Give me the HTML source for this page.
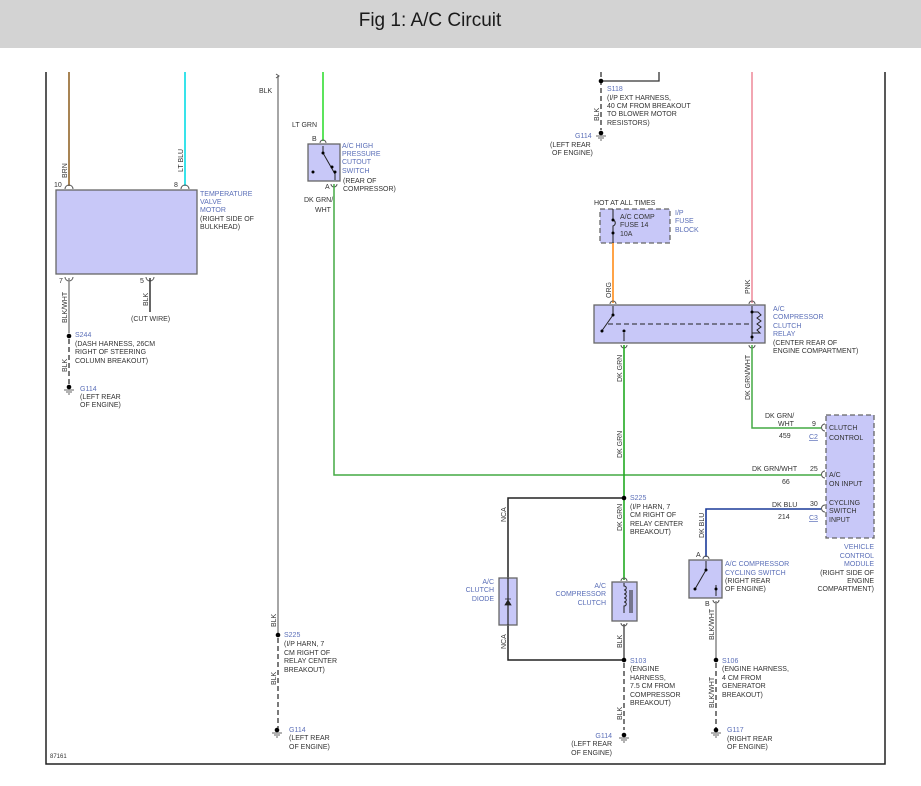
<!DOCTYPE html>
<html><head><meta charset="utf-8"><style>
body{margin:0;width:921px;height:786px;background:#fff;overflow:hidden}
svg{display:block}
text{font-family:"Liberation Sans",sans-serif;font-size:7px;fill:#333}
.b{fill:#5b6fb8}
.box{fill:#c8c8f8;stroke:#666;stroke-width:1.3}
.dbox{fill:#c8c8f8;stroke:#666;stroke-width:1.3;stroke-dasharray:5,3}
</style></head><body>
<svg width="921" height="786" viewBox="0 0 921 786">
<rect x="0" y="0" width="921" height="48" fill="#d3d3d3"/>
<text x="430" y="26" text-anchor="middle" style="font-size:19px;fill:#1a1a1a">Fig 1: A/C Circuit</text>
<path d="M46 72V764H885V72" fill="none" stroke="#222" stroke-width="1.5"/>
<text x="50" y="758" style="font-size:6px">87161</text>

<line x1="69" y1="72" x2="69" y2="186" stroke="#8a5a1a" stroke-width="1.5"/>
<line x1="185" y1="72" x2="185" y2="186" stroke="#22e0e8" stroke-width="1.8"/>
<text transform="translate(67,178) rotate(-90)">BRN</text>
<text transform="translate(183,172) rotate(-90)">LT BLU</text>
<text x="54" y="187">10</text><text x="174" y="187">8</text>
<path d="M65 189a4 4 0 0 1 8 0M181 189a4 4 0 0 1 8 0" fill="none" stroke="#555"/>
<rect class="box" x="56" y="190" width="141" height="84"/>
<text class="b" x="200" y="196">TEMPERATURE</text><text class="b" x="200" y="204">VALVE</text><text class="b" x="200" y="212">MOTOR</text>
<text x="200" y="221">(RIGHT SIDE OF</text><text x="200" y="229">BULKHEAD)</text>
<text x="59" y="283">7</text><text x="140" y="283">5</text>
<path d="M65 277a4 4 0 0 0 8 0M146 277a4 4 0 0 0 8 0" fill="none" stroke="#555"/>
<line x1="69" y1="278" x2="69" y2="333" stroke="#888" stroke-width="1.5"/>
<line x1="150" y1="278" x2="150" y2="312" stroke="#333" stroke-width="1.5"/>
<text transform="translate(67,323) rotate(-90)">BLK/WHT</text>
<text transform="translate(148,306) rotate(-90)">BLK</text>
<text x="131" y="321">(CUT WIRE)</text>
<circle cx="69" cy="336" r="2.3" fill="#000"/>
<line x1="69" y1="339" x2="69" y2="385" stroke="#333" stroke-width="1.3" stroke-dasharray="5,3"/>
<text class="b" x="75" y="337">S244</text>
<text x="75" y="346">(DASH HARNESS, 26CM</text><text x="75" y="354">RIGHT OF STEERING</text><text x="75" y="363">COLUMN BREAKOUT)</text>
<text transform="translate(67,372) rotate(-90)">BLK</text>
<circle cx="69" cy="387" r="2.3" fill="#000"/><path d="M64 390h10M66 392h6M68 394h2" stroke="#666"/>
<text class="b" x="80" y="391">G114</text><text x="80" y="399">(LEFT REAR</text><text x="80" y="407">OF ENGINE)</text>

<line x1="278" y1="76" x2="278" y2="633" stroke="#888" stroke-width="1.5"/>
<path d="M276 74l3 2-3 2" fill="none" stroke="#555"/>
<text x="259" y="93">BLK</text>
<text transform="translate(276,627) rotate(-90)">BLK</text>
<circle cx="278" cy="635" r="2.3" fill="#000"/>
<line x1="278" y1="638" x2="278" y2="728" stroke="#333" stroke-width="1.3" stroke-dasharray="5,3"/>
<text transform="translate(276,685) rotate(-90)">BLK</text>
<text class="b" x="284" y="637">S225</text><text x="284" y="646">(I/P HARN, 7</text><text x="284" y="655">CM RIGHT OF</text><text x="284" y="663">RELAY CENTER</text><text x="284" y="672">BREAKOUT)</text>
<circle cx="277" cy="730" r="2.3" fill="#000"/><path d="M272 733h10M274 735h6M276 737h2" stroke="#666"/>
<text class="b" x="289" y="732">G114</text><text x="289" y="740">(LEFT REAR</text><text x="289" y="749">OF ENGINE)</text>

<line x1="323" y1="72" x2="323" y2="141" stroke="#33dd33" stroke-width="1.6"/>
<text x="292" y="127">LT GRN</text><text x="312" y="141">B</text>
<path d="M320 143a3 3 0 0 1 6 0" fill="none" stroke="#555"/>
<rect class="box" x="308" y="144" width="32" height="37"/>
<path d="M323 146v7l8 14 4 7v6" fill="none" stroke="#222"/>
<circle cx="323" cy="153" r="1.5"/><circle cx="332" cy="167" r="1.5"/><circle cx="335" cy="172" r="1.5"/><circle cx="313" cy="172" r="1.5"/>
<text class="b" x="342" y="148">A/C HIGH</text><text class="b" x="342" y="156">PRESSURE</text><text class="b" x="342" y="164">CUTOUT</text><text class="b" x="342" y="173">SWITCH</text>
<text x="343" y="183">(REAR OF</text><text x="343" y="191">COMPRESSOR)</text>
<text x="325" y="189">A</text>
<path d="M331 184a3 3 0 0 0 6 0" fill="none" stroke="#555"/>
<text x="304" y="202">DK GRN/</text><text x="315" y="212">WHT</text>
<path d="M334 184V475H821" fill="none" stroke="#44aa44" stroke-width="1.5"/>
<text x="752" y="471">DK GRN/WHT</text><text x="782" y="484">66</text><text x="810" y="471">25</text>

<line x1="601" y1="72" x2="601" y2="130" stroke="#333" stroke-width="1.3" stroke-dasharray="5,3"/>
<path d="M601 81H659V72" fill="none" stroke="#333" stroke-width="1.3"/>
<circle cx="601" cy="81" r="2.3" fill="#000"/>
<text class="b" x="607" y="91">S118</text><text x="607" y="100">(I/P EXT HARNESS,</text><text x="607" y="108">40 CM FROM BREAKOUT</text><text x="607" y="116">TO BLOWER MOTOR</text><text x="607" y="125">RESISTORS)</text>
<text transform="translate(599,121) rotate(-90)">BLK</text>
<circle cx="601" cy="133" r="2.3" fill="#000"/><path d="M596 136h10M598 138h6M600 140h2" stroke="#666"/>
<text class="b" x="575" y="138">G114</text><text x="550" y="147">(LEFT REAR</text><text x="552" y="155">OF ENGINE)</text>

<text x="594" y="205">HOT AT ALL TIMES</text>
<rect class="dbox" x="600" y="209" width="70" height="34"/>
<path d="M613 209v11c3 1 3 5 0 6v17" fill="none" stroke="#222"/>
<circle cx="613" cy="220" r="1.5"/><circle cx="613" cy="233" r="1.5"/>
<text x="620" y="219">A/C COMP</text><text x="620" y="227">FUSE 14</text><text x="620" y="236">10A</text>
<text class="b" x="675" y="215">I/P</text><text class="b" x="675" y="223">FUSE</text><text class="b" x="675" y="232">BLOCK</text>
<line x1="613" y1="243" x2="613" y2="303" stroke="#ff9933" stroke-width="1.8"/>
<text transform="translate(611,298) rotate(-90)">ORG</text>
<line x1="752" y1="72" x2="752" y2="303" stroke="#ee8899" stroke-width="1.5"/>
<text transform="translate(750,294) rotate(-90)">PNK</text>

<path d="M610 304a3 3 0 0 1 6 0M749 304a3 3 0 0 1 6 0" fill="none" stroke="#555"/>
<rect class="box" x="594" y="305" width="171" height="38"/>
<path d="M613 306v9l-12 17M624 333v8" fill="none" stroke="#222"/>
<circle cx="613" cy="315" r="1.5"/><circle cx="602" cy="331" r="1.5"/><circle cx="624" cy="331" r="1.5"/>
<line x1="608" y1="324" x2="750" y2="324" stroke="#222" stroke-dasharray="5,3"/>
<path d="M752 306v35M752 312h6l3 3-4 3 4 3-4 3 4 3-4 3 3 3h-8" fill="none" stroke="#222"/>
<circle cx="752" cy="312" r="1.5"/><circle cx="752" cy="337" r="1.5"/>
<path d="M621 345a3 3 0 0 0 6 0M749 345a3 3 0 0 0 6 0" fill="none" stroke="#555"/>
<text class="b" x="773" y="311">A/C</text><text class="b" x="773" y="319">COMPRESSOR</text><text class="b" x="773" y="328">CLUTCH</text><text class="b" x="773" y="336">RELAY</text>
<text x="773" y="345">(CENTER REAR OF</text><text x="773" y="353">ENGINE COMPARTMENT)</text>
<line x1="624" y1="345" x2="624" y2="580" stroke="#22aa22" stroke-width="1.6"/>
<text transform="translate(622,382) rotate(-90)">DK GRN</text>
<text transform="translate(622,458) rotate(-90)">DK GRN</text>
<text transform="translate(622,531) rotate(-90)">DK GRN</text>
<path d="M752 345V428H821" fill="none" stroke="#44aa44" stroke-width="1.5"/>
<text transform="translate(750,400) rotate(-90)">DK GRN/WHT</text>
<text x="765" y="418">DK GRN/</text><text x="778" y="426">WHT</text><text x="779" y="438">459</text>
<text x="812" y="426">9</text><text x="809" y="439" class="b" style="text-decoration:underline">C2</text>

<rect class="dbox" x="826" y="415" width="48" height="123"/>
<path d="M825 424a3 3 0 0 0 0 7M825 471a3 3 0 0 0 0 7M825 505a3 3 0 0 0 0 7" fill="none" stroke="#555"/>
<text x="829" y="430">CLUTCH</text><text x="829" y="440">CONTROL</text>
<text x="829" y="477">A/C</text><text x="829" y="486">ON INPUT</text>
<text x="829" y="505">CYCLING</text><text x="829" y="513">SWITCH</text><text x="829" y="522">INPUT</text>
<text class="b" x="874" y="549" text-anchor="end">VEHICLE</text><text class="b" x="874" y="558" text-anchor="end">CONTROL</text><text class="b" x="874" y="566" text-anchor="end">MODULE</text>
<text x="874" y="575" text-anchor="end">(RIGHT SIDE OF</text><text x="874" y="583" text-anchor="end">ENGINE</text><text x="874" y="591" text-anchor="end">COMPARTMENT)</text>

<path d="M821 509H706V557" fill="none" stroke="#1a3a99" stroke-width="1.6"/>
<text x="772" y="507">DK BLU</text><text x="810" y="506">30</text><text x="778" y="519">214</text><text x="809" y="520" class="b" style="text-decoration:underline">C3</text>
<text transform="translate(704,538) rotate(-90)">DK BLU</text>
<text x="696" y="557">A</text>
<path d="M703 559a3 3 0 0 1 6 0" fill="none" stroke="#555"/>
<rect class="box" x="689" y="560" width="33" height="38"/>
<path d="M706 561v9l-11 19M716 585v11" fill="none" stroke="#222"/>
<circle cx="706" cy="570" r="1.5"/><circle cx="695" cy="589" r="1.5"/><circle cx="716" cy="589" r="1.5"/>
<text class="b" x="725" y="566">A/C COMPRESSOR</text><text class="b" x="725" y="575">CYCLING SWITCH</text>
<text x="725" y="583">(RIGHT REAR</text><text x="725" y="591">OF ENGINE)</text>
<text x="705" y="606">B</text>
<path d="M713 600a3 3 0 0 0 6 0" fill="none" stroke="#555"/>
<line x1="716" y1="601" x2="716" y2="658" stroke="#888" stroke-width="1.5"/>
<text transform="translate(714,640) rotate(-90)">BLK/WHT</text>
<circle cx="716" cy="660" r="2.3" fill="#000"/>
<line x1="716" y1="663" x2="716" y2="728" stroke="#333" stroke-width="1.3" stroke-dasharray="5,3"/>
<text transform="translate(714,708) rotate(-90)">BLK/WHT</text>
<text class="b" x="722" y="663">S106</text><text x="722" y="671">(ENGINE HARNESS,</text><text x="722" y="680">4 CM FROM</text><text x="722" y="688">GENERATOR</text><text x="722" y="697">BREAKOUT)</text>
<circle cx="716" cy="730" r="2.3" fill="#000"/><path d="M711 733h10M713 735h6M715 737h2" stroke="#666"/>
<text class="b" x="727" y="732">G117</text><text x="727" y="741">(RIGHT REAR</text><text x="727" y="749">OF ENGINE)</text>

<path d="M624 498H508V660H624" fill="none" stroke="#222" stroke-width="1.5"/>
<circle cx="624" cy="498" r="2.3" fill="#000"/>
<text class="b" x="630" y="500">S225</text><text x="630" y="509">(I/P HARN, 7</text><text x="630" y="517">CM RIGHT OF</text><text x="630" y="526">RELAY CENTER</text><text x="630" y="534">BREAKOUT)</text>
<text transform="translate(506,522) rotate(-90)">NCA</text>
<text transform="translate(506,649) rotate(-90)">NCA</text>
<rect class="box" x="499" y="578" width="18" height="47"/>
<line x1="508" y1="578" x2="508" y2="625" stroke="#222" stroke-width="1.2"/>
<path d="M505 605h6l-3-5zM505 599h6" fill="#222" stroke="#222" stroke-width="0.8"/>
<text class="b" x="494" y="584" text-anchor="end">A/C</text><text class="b" x="494" y="592" text-anchor="end">CLUTCH</text><text class="b" x="494" y="601" text-anchor="end">DIODE</text>
<path d="M621 581a3 3 0 0 1 6 0" fill="none" stroke="#555"/>
<rect class="box" x="612" y="582" width="25" height="39"/>
<path d="M624 583v3c3 0 3 4 0 4 3 0 3 4 0 4 3 0 3 4 0 4 3 0 3 4 0 4 3 0 3 4 0 4v7M630 590v23M632 590v23" fill="none" stroke="#222"/>
<text class="b" x="606" y="588" text-anchor="end">A/C</text><text class="b" x="606" y="596" text-anchor="end">COMPRESSOR</text><text class="b" x="606" y="605" text-anchor="end">CLUTCH</text>
<path d="M621 623a3 3 0 0 0 6 0" fill="none" stroke="#555"/>
<line x1="624" y1="624" x2="624" y2="658" stroke="#555" stroke-width="1.5"/>
<text transform="translate(622,648) rotate(-90)">BLK</text>
<circle cx="624" cy="660" r="2.3" fill="#000"/>
<line x1="624" y1="663" x2="624" y2="730" stroke="#333" stroke-width="1.3" stroke-dasharray="5,3"/>
<text transform="translate(622,720) rotate(-90)">BLK</text>
<text class="b" x="630" y="663">S103</text><text x="630" y="671">(ENGINE</text><text x="630" y="680">HARNESS,</text><text x="630" y="688">7.5 CM FROM</text><text x="630" y="697">COMPRESSOR</text><text x="630" y="705">BREAKOUT)</text>
<circle cx="624" cy="735" r="2.3" fill="#000"/><path d="M619 738h10M621 740h6M623 742h2" stroke="#666"/>
<text class="b" x="612" y="738" text-anchor="end">G114</text><text x="612" y="746" text-anchor="end">(LEFT REAR</text><text x="612" y="755" text-anchor="end">OF ENGINE)</text>
</svg>
</body></html>
